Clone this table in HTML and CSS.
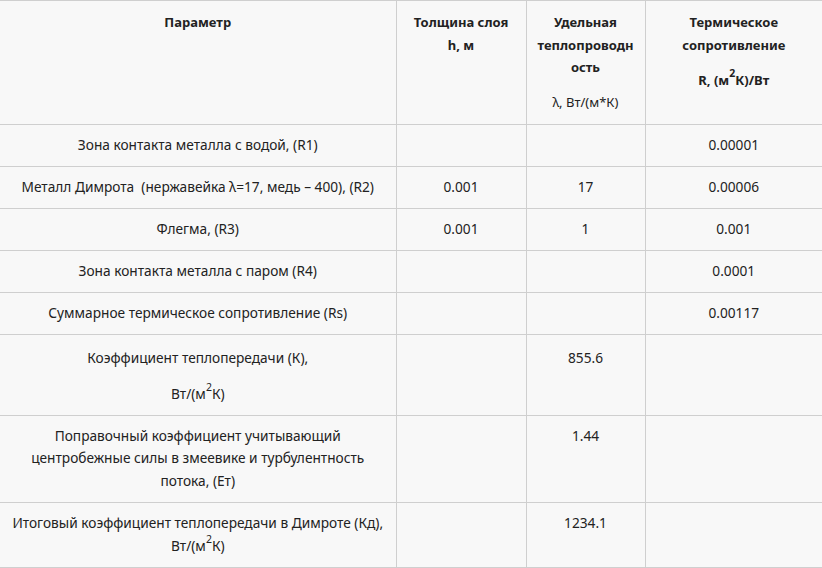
FILE: index.html
```html
<!DOCTYPE html>
<html lang="ru">
<head>
<meta charset="utf-8">
<link rel="stylesheet" href="styles.css">
</head>
<body>
<table class="data">
  <colgroup>
    <col class="c1"><col class="c2"><col class="c3"><col class="c4">
  </colgroup>
  <thead>
    <tr>
      <th>Параметр</th>
      <th>Толщина слоя<br>h, м</th>
      <th><p>Удельная<br>теплопроводн<br>ость</p><p class="unit">λ, Вт/(м*К)</p></th>
      <th><p>Термическое<br>сопротивление</p><p>R, (м<sup>2</sup>К)/Вт</p></th>
    </tr>
  </thead>
  <tbody>
    <tr><td>Зона контакта металла с водой, (R1)</td><td></td><td></td><td>0.00001</td></tr>
    <tr><td>Металл Димрота &nbsp;(нержавейка λ=17, медь – 400), (R2)</td><td>0.001</td><td>17</td><td>0.00006</td></tr>
    <tr><td>Флегма, (R3)</td><td>0.001</td><td>1</td><td>0.001</td></tr>
    <tr><td>Зона контакта металла с паром (R4)</td><td></td><td></td><td>0.0001</td></tr>
    <tr><td>Суммарное термическое сопротивление (Rs)</td><td></td><td></td><td>0.00117</td></tr>
    <tr><td><p class="first">Коэффициент теплопередачи (К),</p><p>Вт/(м<sup>2</sup>К)</p></td><td></td><td><p class="first">855.6</p></td><td></td></tr>
    <tr><td>Поправочный коэффициент учитывающий<br>центробежные силы в змеевике и турбулентность<br>потока, (Ет)</td><td></td><td>1.44</td><td></td></tr>
    <tr><td>Итоговый коэффициент теплопередачи в Димроте (Кд),<br>Вт/(м<sup>2</sup>К)</td><td></td><td>1234.1</td><td></td></tr>
  </tbody>
</table>
</body>
</html>
```
FILE: styles.css
```css
html, body {
  margin: 0;
  padding: 0;
  background: #f8f8f8;
}
body {
  font-family: "Noto Sans", "Open Sans", sans-serif;
  font-size: 13.7px;
  color: #222;
}
.data {
  width: 822px;
  border-collapse: collapse;
  table-layout: fixed;
  background: #f8f8f8;
}
.c1 { width: 396px; }
.c2 { width: 130px; }
.c3 { width: 119px; }
.c4 { width: 177px; }
.data th, .data td {
  border: 1px solid #cfcfcf;
  padding: 9px 10px 9.5px;
  text-align: center;
  vertical-align: top;
  line-height: 22.5px;
}
.data th {
  font-size: 13px;
  font-weight: bold;
  padding-top: 10px;
  padding-bottom: 11px;
}
.data tr > :first-child { border-left: none; }
.data tr > :last-child { border-right: none; }
.data p {
  margin: 0;
}
.data p.first {
  margin-top: 3px;
}
.data p + p {
  margin-top: 12px;
}
.data th .unit {
  font-weight: normal;
}
sup {
  font-size: 10.5px;
  line-height: 1;
  vertical-align: 8px;
}
```
